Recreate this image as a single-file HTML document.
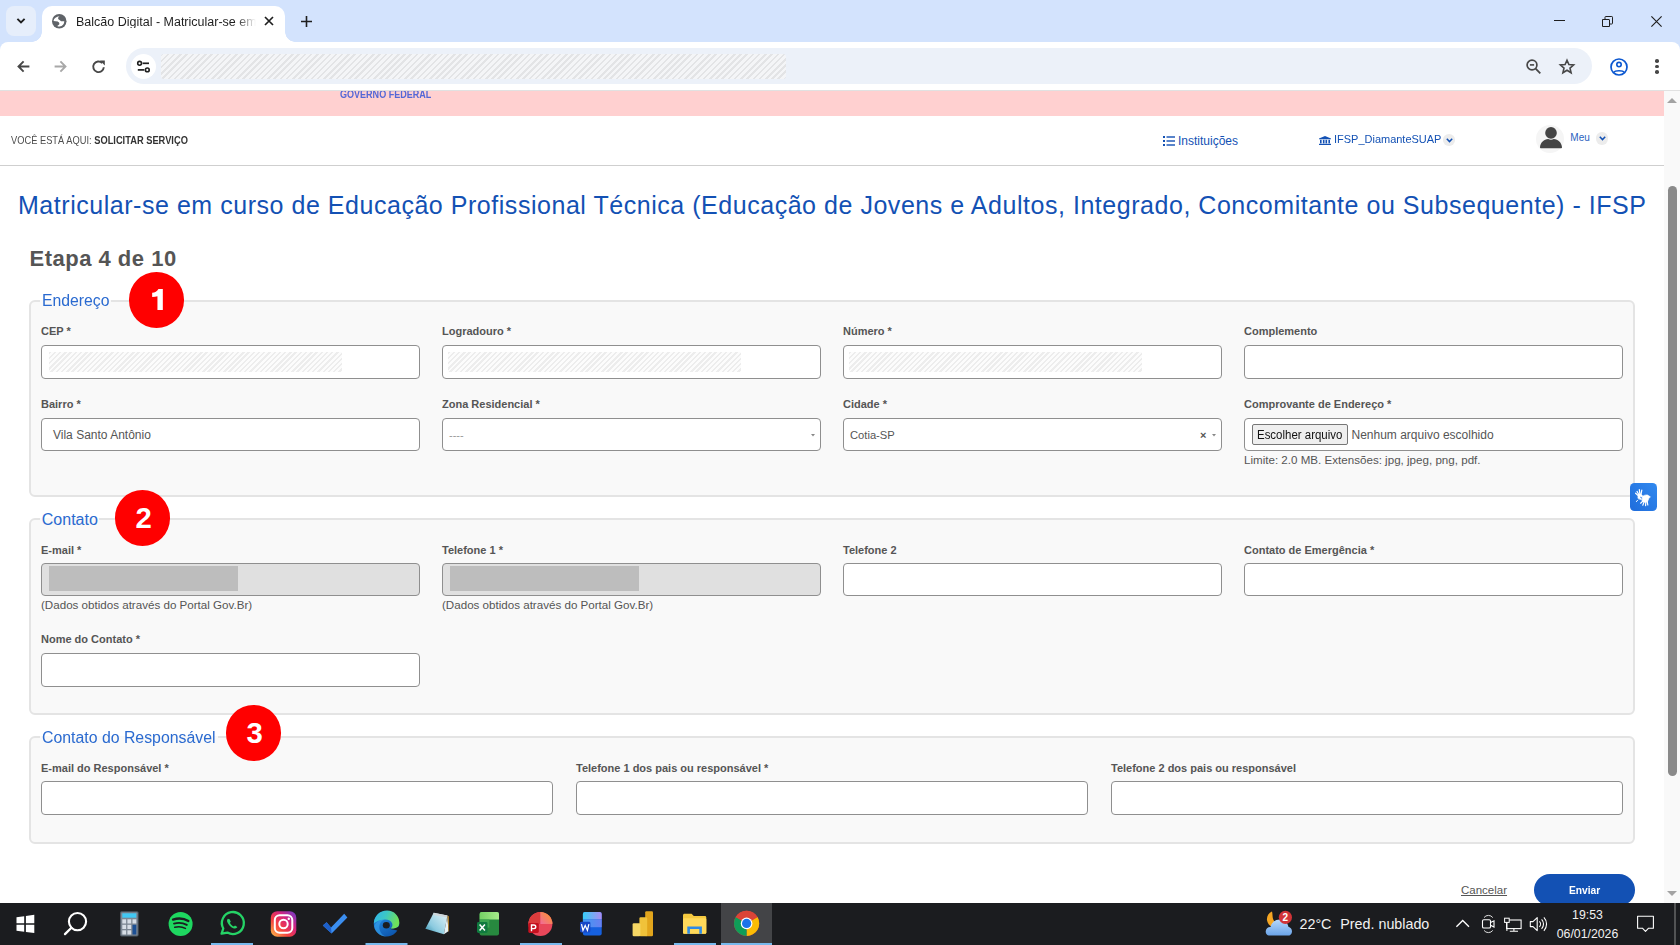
<!DOCTYPE html>
<html><head><meta charset="utf-8">
<style>
*{box-sizing:border-box;margin:0;padding:0}
html,body{width:1680px;height:945px;overflow:hidden;background:#fff;font-family:"Liberation Sans",sans-serif}
.a{position:absolute}
svg{position:absolute;overflow:visible}
#tabbar{left:0;top:0;width:1680px;height:56px;background:#d3e3fd}
#toolbar{left:0;top:42px;width:1680px;height:48px;background:#fff;border-radius:8px 8px 0 0}
#sep{left:0;top:90px;width:1664px;height:1px;background:#e1e1e1}
#scroll{left:1664px;top:91px;width:16px;height:812px;background:#f9f9f9}
#taskbar{left:0;top:903px;width:1680px;height:42px;background:#1c1d21}
.t{position:absolute;white-space:nowrap;line-height:1}
.lbl{position:absolute;font-weight:bold;font-size:11px;color:#555;white-space:nowrap;line-height:1}
.inp{position:absolute;height:34px;background:#fff;border:1px solid #8f8f8f;border-radius:4px}
.dis{background:#e0e0e0}
.hatch{position:absolute;background:repeating-linear-gradient(135deg,#ededed 0 1.7px,#fcfcfc 1.7px 3.7px)}
.fs{position:absolute;left:29px;width:1605.7px;background:#f9f9f9;border:2px solid #e4e4e4;border-radius:6px}
.leg{position:absolute;font-size:16px;color:#2a6ad0;white-space:nowrap;line-height:1;padding:0 1px 0 1.5px}
.badge{position:absolute;width:55.6px;height:55.6px;border-radius:50%;background:#f00;color:#fff;font-weight:bold;font-size:29.3px;text-align:center;line-height:55.6px;padding-left:2.6px}
.help{position:absolute;font-size:11.6px;color:#555;white-space:nowrap;line-height:1}
</style></head>
<body>
<!-- ============ CHROME ============ -->
<div id="tabbar" class="a"></div>
<!-- tab -->
<div class="a" style="left:42px;top:6px;width:243px;height:36px;background:#fff;border-radius:10px 10px 0 0"></div>
<div class="a" style="left:32px;top:32px;width:10px;height:10px;background:radial-gradient(circle at 0 0,#d3e3fd 9.5px,#fff 10px)"></div>
<div class="a" style="left:285px;top:32px;width:10px;height:10px;background:radial-gradient(circle at 100% 0,#d3e3fd 9.5px,#fff 10px)"></div>
<div class="a" style="left:6px;top:6px;width:30px;height:30px;border-radius:8px;background:#e6eefb"></div>
<svg style="left:16px;top:17px" width="10" height="8" viewBox="0 0 10 8"><path d="M1.4 1.8 L5 5.4 L8.6 1.8" fill="none" stroke="#1f1f1f" stroke-width="1.9"/></svg>
<svg style="left:51.5px;top:13.5px" width="14.5" height="14.5" viewBox="0 0 14.5 14.5"><circle cx="7.25" cy="7.25" r="7.25" fill="#5f6368"/><path d="M1.5 6.9C1.9 4.4 4.4 2.4 7.5 2.3C6.7 3 6 3.6 6.1 4.4C6.3 5.2 6.9 5.6 7.6 6C8.3 6.6 8.8 7.2 9.6 7.3C10.5 7.4 11.4 7.2 12.3 7.2C12.3 9.9 10.6 12.1 7.5 12.6C6.6 12.6 5.8 12.4 5.2 11.9C6.2 11.5 7.2 11 7.4 10.1C7.5 9.2 7 8.4 6.3 8C5.4 7.4 4.4 7.4 3.6 7.3Z" fill="#fff"/></svg>
<div class="t" style="left:76px;top:15.8px;font-size:12.5px;color:#1f1f1f;width:180px;overflow:hidden;-webkit-mask-image:linear-gradient(90deg,#000 0,#000 160px,transparent 180px)">Balcão Digital - Matricular-se em curso</div>
<svg style="left:264px;top:16px" width="10" height="10" viewBox="0 0 10 10"><path d="M1 1L9 9M9 1L1 9" stroke="#1f1f1f" stroke-width="1.7"/></svg>
<svg style="left:301px;top:15.5px" width="11" height="11" viewBox="0 0 11 11"><path d="M5.5 0V11M0 5.5H11" stroke="#1f1f1f" stroke-width="1.6"/></svg>
<!-- window controls -->
<div class="a" style="left:1554px;top:19.8px;width:10.5px;height:1.2px;background:#1f1f1f"></div>
<svg style="left:1602px;top:15.5px" width="11" height="11" viewBox="0 0 11 11"><path d="M0.5 3.5h6.5a0.5 .5 0 0 1 .5.5v6.5h-7z" fill="none" stroke="#1f1f1f" stroke-width="1"/><path d="M3 3V1.2a.7.7 0 0 1 .7-.7H9.8a.7.7 0 0 1 .7.7V7.3a.7.7 0 0 1-.7.7H8" fill="none" stroke="#1f1f1f" stroke-width="1"/></svg>
<svg style="left:1650.5px;top:16px" width="11" height="11" viewBox="0 0 11 11"><path d="M0.4 0.4L10.6 10.6M10.6 0.4L0.4 10.6" stroke="#1f1f1f" stroke-width="1.15"/></svg>

<div id="toolbar" class="a"></div>
<svg style="left:17px;top:60px" width="13" height="13" viewBox="0 0 13 13"><path d="M12.4 6.5H1.8M6.6 1.4L1.5 6.5L6.6 11.6" fill="none" stroke="#474747" stroke-width="1.9"/></svg>
<svg style="left:54px;top:60px" width="13" height="13" viewBox="0 0 13 13"><path d="M0.6 6.5H11.2M6.4 1.4L11.5 6.5L6.4 11.6" fill="none" stroke="#a8a8a8" stroke-width="1.9"/></svg>
<svg style="left:92px;top:59.5px" width="14" height="14" viewBox="0 0 14 14"><path d="M11.8 7.2A5.3 5.3 0 1 1 10.2 3" fill="none" stroke="#474747" stroke-width="1.9"/><path d="M8 0.6H12.8V5.4Z" fill="#474747"/></svg>
<div class="a" style="left:126px;top:48px;width:1466px;height:36px;border-radius:18px;background:#ecf1f9"></div>
<div class="a" style="left:131px;top:53.5px;width:25px;height:25px;border-radius:50%;background:#fff"></div>
<svg style="left:137px;top:59.5px" width="13" height="13" viewBox="0 0 13 13"><circle cx="2.6" cy="3.3" r="1.9" fill="none" stroke="#1f1f1f" stroke-width="1.6"/><path d="M5.6 3.3H12" stroke="#1f1f1f" stroke-width="1.7"/><circle cx="10.3" cy="9.9" r="1.9" fill="none" stroke="#1f1f1f" stroke-width="1.6"/><path d="M0.8 9.9H7.3" stroke="#1f1f1f" stroke-width="1.7"/></svg>
<div class="hatch" style="left:161px;top:54px;width:625px;height:25px;border-radius:3px;background:repeating-linear-gradient(135deg,#e3e4e6 0 1.8px,#f4f5f7 1.8px 4.4px)"></div>
<svg style="left:1525.5px;top:58.5px" width="15" height="15" viewBox="0 0 15 15"><circle cx="6" cy="6" r="4.9" fill="none" stroke="#474747" stroke-width="1.7"/><path d="M3.9 5.9H8.1" stroke="#474747" stroke-width="1.6"/><path d="M9.4 9.4L14.3 14.3" stroke="#474747" stroke-width="1.8"/></svg>
<svg style="left:1558.5px;top:58.5px" width="16" height="15" viewBox="0 0 16 15"><path d="M8 1.2L9.9 5.6L14.6 6L11 9.1L12.1 13.7L8 11.2L3.9 13.7L5 9.1L1.4 6L6.1 5.6Z" fill="none" stroke="#474747" stroke-width="1.6" stroke-linejoin="miter"/></svg>
<svg style="left:1610px;top:57.5px" width="18" height="18" viewBox="0 0 18 18"><circle cx="9" cy="9" r="8" fill="none" stroke="#0b57d0" stroke-width="1.7"/><circle cx="9" cy="6.6" r="2.2" fill="none" stroke="#0b57d0" stroke-width="1.6"/><path d="M3.8 14.5C5 12.2 13 12.2 14.2 14.5" fill="none" stroke="#0b57d0" stroke-width="1.6"/></svg>
<div class="a" style="left:1655.2px;top:59px;width:3.6px;height:3.6px;border-radius:50%;background:#474747"></div>
<div class="a" style="left:1655.2px;top:64.6px;width:3.6px;height:3.6px;border-radius:50%;background:#474747"></div>
<div class="a" style="left:1655.2px;top:70.2px;width:3.6px;height:3.6px;border-radius:50%;background:#474747"></div>
<div id="sep" class="a"></div>
<div class="a" style="left:1664px;top:90px;width:16px;height:1px;background:#e1e1e1"></div>

<!-- ============ PAGE ============ -->
<div class="a" style="left:0;top:91px;width:1664px;height:25px;background:#ffd0d0;overflow:hidden">
  <div class="t" style="left:340px;top:-2px;font-size:10.5px;font-weight:bold;color:#5468d6;transform:scaleX(0.86);transform-origin:0 0">GOVERNO FEDERAL</div>
</div>
<div class="t" style="left:11px;top:135.5px;font-size:10.4px;color:#4d4d4d;transform:scaleX(0.895);transform-origin:0 0">VOCÊ ESTÁ AQUI: <b style="color:#333">SOLICITAR SERVIÇO</b></div>
<svg style="left:1163px;top:136px" width="12" height="10" viewBox="0 0 12 10"><rect x="0" y="0" width="2" height="2" fill="#1351b4"/><rect x="0" y="4" width="2" height="2" fill="#1351b4"/><rect x="0" y="8" width="2" height="2" fill="#1351b4"/><rect x="3.5" y="0.3" width="8.5" height="1.4" fill="#1351b4"/><rect x="3.5" y="4.3" width="8.5" height="1.4" fill="#1351b4"/><rect x="3.5" y="8.3" width="8.5" height="1.4" fill="#1351b4"/></svg>
<div class="t" style="left:1178px;top:135px;font-size:12px;color:#1351b4">Instituições</div>
<svg style="left:1318.5px;top:135.5px" width="12" height="9" viewBox="0 0 12 9"><path d="M6 0L12 2.4V3.2H0V2.4Z" fill="#1351b4"/><rect x="1" y="3.8" width="1.6" height="3.6" fill="#1351b4"/><rect x="3.9" y="3.8" width="1.6" height="3.6" fill="#1351b4"/><rect x="6.5" y="3.8" width="1.6" height="3.6" fill="#1351b4"/><rect x="9.4" y="3.8" width="1.6" height="3.6" fill="#1351b4"/><rect x="0" y="7.8" width="12" height="1.2" fill="#1351b4"/></svg>
<div class="t" style="left:1334px;top:134px;font-size:11.5px;color:#1351b4;transform:scaleX(0.955);transform-origin:0 0">IFSP_DiamanteSUAP</div>
<div class="a" style="left:1443px;top:134px;width:11.5px;height:11.5px;border-radius:50%;background:#ececec"></div>
<svg style="left:1445.5px;top:137.5px" width="7" height="5" viewBox="0 0 7 5"><path d="M0.8 0.8L3.5 3.6L6.2 0.8" fill="none" stroke="#1351b4" stroke-width="1.5"/></svg>
<div class="a" style="left:1536px;top:125px;width:28px;height:28px;border-radius:50%;background:#f5f5f5"></div>
<svg style="left:1539.5px;top:127px" width="22" height="22" viewBox="0 0 22 22"><circle cx="11" cy="5.9" r="5.8" fill="#444"/><path d="M1.2 21.3C0.4 21.3 0 20.9 0 20.2C0.4 15.6 4 12.3 8.2 12.1Q11 13.2 13.8 12.1C18 12.3 21.6 15.6 22 20.2C22 20.9 21.6 21.3 20.8 21.3Z" fill="#444"/></svg>
<div class="t" style="left:1570.3px;top:132.8px;font-size:10px;color:#2b62c0">Meu</div>
<div class="a" style="left:1596px;top:132px;width:11.5px;height:12.5px;border-radius:50%;background:#ececec"></div>
<svg style="left:1598.5px;top:136px" width="7" height="5" viewBox="0 0 7 5"><path d="M0.8 0.8L3.5 3.6L6.2 0.8" fill="none" stroke="#1351b4" stroke-width="1.5"/></svg>
<div class="a" style="left:0;top:164.5px;width:1664px;height:1.2px;background:#cfcfcf"></div>

<div class="t" style="left:18px;top:193px;font-size:25px;letter-spacing:0.535px;color:#1351b4">Matricular-se em curso de Educação Profissional Técnica (Educação de Jovens e Adultos, Integrado, Concomitante ou Subsequente) - IFSP</div>
<div class="t" style="left:29.5px;top:247.8px;font-size:22px;letter-spacing:0.5px;font-weight:bold;color:#555">Etapa 4 de 10</div>

<!-- FIELDSET 1 -->
<div class="fs" style="top:300px;height:197px"></div>
<div class="leg" style="left:40.4px;top:293.15px;background:linear-gradient(#fff 0,#fff 6.85px,#f9f9f9 6.85px)"><span style="display:inline-block;transform:scaleX(0.985);transform-origin:0 0">Endereço</span></div>
<div class="badge" style="left:128.7px;top:272.1px"></div><svg style="left:151.5px;top:289.3px" width="11" height="21" viewBox="0 0 10.5 20.7"><path d="M6.2 0H10.5V20.7H5.2V7.2C3.8 7.6 2 7.8 0 7.9V3.8C2.6 3.6 5 2.2 6.2 0Z" fill="#fff"/></svg>

<div class="lbl" style="left:41px;top:326px">CEP *</div>
<div class="lbl" style="left:442px;top:326px">Logradouro *</div>
<div class="lbl" style="left:843px;top:326px">Número *</div>
<div class="lbl" style="left:1244px;top:326px">Complemento</div>
<div class="inp" style="left:41px;top:345px;width:379px"></div>
<div class="inp" style="left:442px;top:345px;width:379px"></div>
<div class="inp" style="left:843px;top:345px;width:379px"></div>
<div class="inp" style="left:1244px;top:345px;width:379px"></div>
<div class="hatch" style="left:49px;top:351.5px;width:293px;height:20px"></div>
<div class="hatch" style="left:448px;top:351.5px;width:293px;height:20px"></div>
<div class="hatch" style="left:849px;top:351.5px;width:293px;height:20px"></div>

<div class="lbl" style="left:41px;top:399px">Bairro *</div>
<div class="lbl" style="left:442px;top:399px">Zona Residencial *</div>
<div class="lbl" style="left:843px;top:399px">Cidade *</div>
<div class="lbl" style="left:1244px;top:399px">Comprovante de Endereço *</div>
<div class="inp" style="left:41px;top:418px;width:379px;height:33px"></div>
<div class="inp" style="left:442px;top:418px;width:379px;height:33px"></div>
<div class="inp" style="left:843px;top:418px;width:379px;height:33px"></div>
<div class="inp" style="left:1244px;top:418px;width:379px;height:33px"></div>
<div class="t" style="left:53px;top:429px;font-size:12px;color:#555">Vila Santo Antônio</div>
<div class="t" style="left:449px;top:430px;font-size:11px;color:#999">----</div>
<svg style="left:810.5px;top:434px" width="4" height="3" viewBox="0 0 4 3"><path d="M0 0H4L2 2.6Z" fill="#888"/></svg>
<div class="t" style="left:850px;top:430.2px;font-size:11.2px;color:#555">Cotia-SP</div>
<div class="t" style="left:1200px;top:429.5px;font-size:11px;font-weight:bold;color:#555">×</div>
<svg style="left:1212px;top:434px" width="4" height="3" viewBox="0 0 4 3"><path d="M0 0H4L2 2.6Z" fill="#888"/></svg>
<div class="a" style="left:1252px;top:424px;width:96px;height:21px;background:#efefef;border:1px solid #767676;border-radius:2px"></div>
<div class="t" style="left:1256.5px;top:429px;font-size:12px;color:#111;transform:scaleX(0.955);transform-origin:0 0">Escolher arquivo</div>
<div class="t" style="left:1351.5px;top:429px;font-size:12px;color:#555">Nenhum arquivo escolhido</div>
<div class="help" style="left:1244px;top:454.4px">Limite: 2.0 MB. Extensões: jpg, jpeg, png, pdf.</div>

<!-- FIELDSET 2 -->
<div class="fs" style="top:518px;height:197px"></div>
<div class="leg" style="left:40.3px;top:511.9px;background:linear-gradient(#fff 0,#fff 6.1px,#f9f9f9 6.1px)">Contato</div>
<div class="badge" style="left:114.5px;top:490.2px">2</div>
<div class="lbl" style="left:41px;top:545px">E-mail *</div>
<div class="lbl" style="left:442px;top:545px">Telefone 1 *</div>
<div class="lbl" style="left:843px;top:545px">Telefone 2</div>
<div class="lbl" style="left:1244px;top:545px">Contato de Emergência *</div>
<div class="inp dis" style="left:41px;top:563px;width:379px;height:33px"></div>
<div class="inp dis" style="left:442px;top:563px;width:379px;height:33px"></div>
<div class="inp" style="left:843px;top:563px;width:379px;height:33px"></div>
<div class="inp" style="left:1244px;top:563px;width:379px;height:33px"></div>
<div class="a" style="left:49px;top:566px;width:189px;height:25px;background:#bdbdbd"></div>
<div class="a" style="left:450px;top:566px;width:189px;height:25px;background:#bdbdbd"></div>
<div class="help" style="left:41px;top:599.1px">(Dados obtidos através do Portal Gov.Br)</div>
<div class="help" style="left:442px;top:599.1px">(Dados obtidos através do Portal Gov.Br)</div>
<div class="lbl" style="left:41px;top:634px">Nome do Contato *</div>
<div class="inp" style="left:41px;top:653px;width:379px;height:34px"></div>

<!-- FIELDSET 3 -->
<div class="fs" style="top:736px;height:107.5px"></div>
<div class="leg" style="left:40.3px;top:729.9px;background:linear-gradient(#fff 0,#fff 6.1px,#f9f9f9 6.1px)"><span style="display:inline-block;transform:scaleX(0.99);transform-origin:0 0">Contato do Responsável</span></div>
<div class="badge" style="left:225.6px;top:705.1px">3</div>
<div class="lbl" style="left:41px;top:763px">E-mail do Responsável *</div>
<div class="lbl" style="left:576px;top:763px">Telefone 1 dos pais ou responsável *</div>
<div class="lbl" style="left:1111px;top:763px">Telefone 2 dos pais ou responsável</div>
<div class="inp" style="left:41px;top:781px;width:512px;height:34px"></div>
<div class="inp" style="left:576px;top:781px;width:512px;height:34px"></div>
<div class="inp" style="left:1111px;top:781px;width:512px;height:34px"></div>

<div class="t" style="left:1461px;top:885px;font-size:11.5px;color:#555;text-decoration:underline">Cancelar</div>
<div class="a" style="left:1534px;top:874px;width:101px;height:32px;border-radius:16px;background:#1351b4"></div>
<div class="t" style="left:1568.5px;top:885px;font-size:11.5px;font-weight:bold;color:#fff;transform:scaleX(0.89);transform-origin:0 0">Enviar</div>

<!-- vlibras -->
<div class="a" style="left:1629.7px;top:483px;width:27.3px;height:28.2px;border-radius:4.5px;background:linear-gradient(45deg,#1f6cdb,#3189ef)"></div>
<svg style="left:1635px;top:488.5px" width="16" height="17" viewBox="0 0 16 17"><g fill="#fff" stroke="#fff" stroke-linecap="round">
<path d="M3.2 9.6C2.6 8.4 2.8 7.2 3.6 6.4L5.4 5.6C6.6 5.4 7.6 6.2 7.6 7.4L6.4 10.4Z" stroke-width="0.6"/>
<path d="M3.6 7L0.6 4.2M4.2 6.2L2 2.4M5 5.8L4.3 0.6M6 5.7L6.8 1.2" stroke-width="1.2" fill="none"/>
<path d="M7 8.2C8.2 6.4 10.4 5.6 12.6 6C13.6 6.8 14.6 7.4 15.4 7.8L13.8 9.6L12.6 12.6C11 13.6 8.6 13.4 7.2 12Z" stroke-width="0.6"/>
<path d="M8 12L5.6 14.2M9.2 12.6L7.8 16.2M10.8 12.8L10.6 16.6M12.2 12.4L12.8 16" stroke-width="1.2" fill="none"/>
<path d="M2.6 11.2L1.4 12.6" stroke-width="1" fill="none"/>
<path d="M5.6 8.2C6.4 8 7 8.6 6.8 9.2" stroke="#2a7ae6" stroke-width="0.9" fill="none"/>
</g></svg>

<!-- scrollbar -->
<div id="scroll" class="a"></div>
<svg style="left:1667px;top:98px" width="10" height="5" viewBox="0 0 10 5"><path d="M0 5L5 0L10 5Z" fill="#a3a3a3"/></svg>
<div class="a" style="left:1667.5px;top:186px;width:9.5px;height:590px;border-radius:5px;background:#8a8a8a"></div>
<svg style="left:1667px;top:890.5px" width="10" height="5" viewBox="0 0 10 5"><path d="M0 0L10 0L5 5Z" fill="#a3a3a3"/></svg>

<!-- ============ TASKBAR ============ -->

<svg style="left:0;top:903px" width="1680" height="42" viewBox="0 903 1680 42">
<defs>
 <linearGradient id="ig" x1="0" y1="1" x2="1" y2="0"><stop offset="0" stop-color="#fdc34a"/><stop offset="0.35" stop-color="#f6433e"/><stop offset="0.65" stop-color="#d3237f"/><stop offset="1" stop-color="#6a3fd2"/></linearGradient>
 <linearGradient id="edg" x1="0" y1="0" x2="1" y2="1"><stop offset="0" stop-color="#37c5f0"/><stop offset="0.55" stop-color="#1a7fd4"/><stop offset="1" stop-color="#0c59a4"/></linearGradient>
 <linearGradient id="edg2" x1="0" y1="0" x2="1" y2="0.3"><stop offset="0" stop-color="#2fb4ee"/><stop offset="0.5" stop-color="#3cc7c6"/><stop offset="1" stop-color="#6fe05a"/></linearGradient>
 <linearGradient id="edgb" x1="0" y1="0" x2="0.6" y2="1"><stop offset="0" stop-color="#2794ea"/><stop offset="1" stop-color="#0e58b0"/></linearGradient>
 <linearGradient id="xlt" x1="0" y1="0" x2="1" y2="0"><stop offset="0" stop-color="#74d164"/><stop offset="1" stop-color="#a6ea8a"/></linearGradient>
 <linearGradient id="ppo" x1="0" y1="1" x2="1" y2="0"><stop offset="0" stop-color="#f26a9a"/><stop offset="1" stop-color="#f99a22"/></linearGradient>
 <linearGradient id="wdt" x1="0" y1="0" x2="1" y2="0"><stop offset="0" stop-color="#36cdf8"/><stop offset="1" stop-color="#ae8cf0"/></linearGradient>
 <linearGradient id="wdm" x1="0" y1="0" x2="1" y2="0"><stop offset="0" stop-color="#3f9af3"/><stop offset="1" stop-color="#6a7ff0"/></linearGradient>
 <linearGradient id="npd" x1="0" y1="1" x2="1" y2="0"><stop offset="0" stop-color="#2f8aa8"/><stop offset="0.35" stop-color="#8ccbe0"/><stop offset="1" stop-color="#e6f4f8"/></linearGradient>
 <linearGradient id="ppt" x1="0" y1="0" x2="1" y2="1"><stop offset="0" stop-color="#e8534a"/><stop offset="1" stop-color="#f79a6e"/></linearGradient>
 <linearGradient id="wrd" x1="0" y1="0" x2="0" y2="1"><stop offset="0" stop-color="#5ab0f6"/><stop offset="1" stop-color="#1b5fd6"/></linearGradient>
 <linearGradient id="xls" x1="0" y1="0" x2="0" y2="1"><stop offset="0" stop-color="#5ed580"/><stop offset="1" stop-color="#1f7f44"/></linearGradient>
 <linearGradient id="pbi" x1="0" y1="0" x2="0" y2="1"><stop offset="0" stop-color="#f4d54b"/><stop offset="1" stop-color="#e0a825"/></linearGradient>
 <linearGradient id="cld" x1="0" y1="0" x2="0" y2="1"><stop offset="0" stop-color="#b6d8fb"/><stop offset="1" stop-color="#6aa3e8"/></linearGradient>
</defs>
<rect x="0" y="903" width="1680" height="42" fill="#1b1c1f"/>
<!-- chrome active bg -->
<rect x="721" y="903" width="51" height="42" fill="#434447"/>
<!-- indicators -->
<rect x="211" y="943" width="42" height="2" fill="#76b9ed"/>
<rect x="365.5" y="943" width="42" height="2" fill="#76b9ed"/>
<rect x="520" y="943" width="42" height="2" fill="#76b9ed"/>
<rect x="674" y="943" width="42" height="2" fill="#76b9ed"/>
<rect x="721" y="943" width="51" height="2" fill="#76b9ed"/>
<!-- windows -->
<path d="M16.5 917.3L24.2 916.2V923.2H16.5Z M16.5 924.8H24.2V931.8L16.5 930.7Z M25.9 916L34.3 914.8V923.2H25.9Z M25.9 924.8H34.3V933.1L25.9 931.9Z" fill="#fff"/>
<!-- search -->
<circle cx="77.5" cy="921.6" r="8.6" fill="none" stroke="#fff" stroke-width="2.1"/>
<path d="M71.4 927.7L65 934.1" stroke="#fff" stroke-width="2.3" stroke-linecap="round"/>
<!-- calculator -->
<rect x="120" y="911.2" width="18.6" height="25.2" rx="1.6" fill="#4f5a66"/>
<rect x="121" y="912.2" width="16.6" height="23.2" rx="1" fill="#7c8794"/>
<rect x="122.3" y="913.3" width="14" height="4.4" fill="#41c8f4"/>
<rect x="122.3" y="919.3" width="3.8" height="4.2" fill="#d6dde6"/><rect x="127.4" y="919.3" width="3.8" height="4.2" fill="#d6dde6"/><rect x="132.5" y="919.3" width="3.8" height="4.2" fill="#d6dde6"/>
<rect x="122.3" y="924.8" width="3.8" height="4.2" fill="#d6dde6"/><rect x="127.4" y="924.8" width="3.8" height="4.2" fill="#d6dde6"/>
<rect x="122.3" y="930.3" width="3.8" height="4.2" fill="#d6dde6"/><rect x="127.4" y="930.3" width="3.8" height="4.2" fill="#d6dde6"/>
<rect x="132.5" y="924.8" width="3.8" height="9.7" fill="#1b4f94"/>
<!-- spotify -->
<circle cx="180.6" cy="923.9" r="12" fill="#1ed760"/>
<path d="M173 919.6C178 918 184 918.4 188.4 921" fill="none" stroke="#1c1d21" stroke-width="2.3" stroke-linecap="round"/>
<path d="M174 923.6C178.2 922.4 183 922.8 186.8 924.9" fill="none" stroke="#1c1d21" stroke-width="1.9" stroke-linecap="round"/>
<path d="M174.8 927.3C178.4 926.4 182.2 926.7 185.4 928.4" fill="none" stroke="#1c1d21" stroke-width="1.6" stroke-linecap="round"/>
<!-- whatsapp -->
<path d="M221.6 933.7L223.3 928.5A11 11 0 1 1 227.4 932.6Z" fill="none" stroke="#25d366" stroke-width="2.3" stroke-linejoin="round"/>
<path d="M227.8 918.8C227 919.6 226.8 920.8 227.4 922.2C228.4 924.6 230.6 927 233.2 928.2C234.8 928.9 236 928.7 236.8 927.8L237.4 926.9L235 925.6L233.9 926.6C232.2 925.9 230.7 924.4 229.9 922.8L230.8 921.7L229.6 919.2Z" fill="#25d366"/>
<!-- instagram -->
<rect x="270.8" y="911.2" width="25.5" height="25.5" rx="6.5" fill="url(#ig)"/>
<rect x="274.8" y="915.2" width="17.5" height="17.5" rx="4.8" fill="none" stroke="#fff" stroke-width="2"/>
<circle cx="283.5" cy="924" r="4.2" fill="none" stroke="#fff" stroke-width="2"/>
<circle cx="288.8" cy="918.8" r="1.2" fill="#fff"/>
<!-- todo -->
<path d="M322.8 925.6L326.6 922.3L331 927.4L344.2 913.8L347.4 917.4L331.6 933.6Z" fill="#3b8ef0"/>
<path d="M322.8 925.6L326.6 922.3L331 927.4L331.6 933.6Z" fill="#1d5fc9"/>
<!-- edge -->
<circle cx="386.5" cy="923.8" r="12.7" fill="url(#edgb)"/>
<path d="M373.8 923.2C374.2 915.8 380 910.4 387 910.4C394.2 910.4 399.3 916 399.3 922.6C399.3 924.2 398.9 925.6 398.2 926.6C396.6 928.6 393.4 929.2 390.6 928.6C392.2 927.4 392.8 925.6 392.2 923.6C391.2 920.6 388 919.2 384.8 919.4C380.4 919.8 376.2 921.2 373.8 923.2Z" fill="url(#edg2)"/>
<path d="M374.2 926.5C375.6 921.8 380 919.6 384.6 919.6C380.6 921 378.6 925 379.6 929.4C380.4 933 383 935.8 386.4 936.6C379.8 936.4 375 932 374.2 926.5Z" fill="#3aa8f0" opacity="0.55"/>
<path d="M400 925.2C397 928.4 392.6 929.2 388.4 928.6C392.4 929.6 395.6 930.2 398.6 931Z" fill="#1c1d21"/>
<ellipse cx="386.3" cy="925.3" rx="3.5" ry="3.3" fill="#1c1d21"/>
<!-- notepad -->
<path d="M433.7 912.8L447.4 915.4L443.9 934.3L425.4 928.8Z" fill="url(#npd)"/>
<path d="M447.4 915.4L448.4 931.2L443.9 934.3Z" fill="#e9f1f4"/>
<path d="M447.4 915.4L448.9 916.2L449 931.4L448.4 931.2Z" fill="#b3842f"/>
<path d="M433.7 912.8L447.4 915.4L447 917.4L433.2 914.9Z" fill="#cfd6da"/>
<!-- excel -->
<rect x="479.6" y="912.1" width="19.4" height="23.3" rx="2" fill="#27893f"/>
<path d="M479.6 919.6V914.1Q479.6 912.1 481.6 912.1H497Q499 912.1 499 914.1V919.6Z" fill="url(#xlt)"/>
<rect x="479.6" y="919.6" width="9.7" height="8" fill="#3aa550"/>
<rect x="477" y="922" width="10.5" height="10.9" rx="1.4" fill="#0f7a3f"/>
<path d="M479.6 924.4L484.9 930.6M484.9 924.4L479.6 930.6" stroke="#fff" stroke-width="1.5"/>
<!-- powerpoint -->
<circle cx="540.4" cy="924" r="12" fill="#e8475a"/>
<path d="M540.4 912A12 12 0 0 0 528.4 924H540.4Z" fill="#db3c3c"/>
<path d="M540.4 912A12 12 0 0 1 552.4 924H540.4Z" fill="url(#ppo)"/>
<rect x="528.3" y="922.9" width="10.5" height="10" rx="1.4" fill="#c5111f"/>
<path d="M531.5 931.2V925H533.9C536.4 925 536.4 928.6 533.9 928.6H531.5" fill="none" stroke="#fff" stroke-width="1.4"/>
<!-- word -->
<rect x="582.9" y="912.1" width="18.8" height="23.3" rx="2" fill="#1660df"/>
<path d="M582.9 919.6V914.1Q582.9 912.1 584.9 912.1H599.7Q601.7 912.1 601.7 914.1V919.6Z" fill="url(#wdt)"/>
<rect x="582.9" y="919.6" width="18.8" height="7.6" fill="url(#wdm)"/>
<rect x="580" y="921.7" width="10.4" height="10.8" rx="1.4" fill="#1746c6"/>
<path d="M581.5 924.2L583 930.4L585.2 925.6L587.4 930.4L588.9 924.2" fill="none" stroke="#fff" stroke-width="1.25"/>
<!-- powerbi -->
<rect x="645.2" y="911.3" width="7.8" height="25" rx="1.2" fill="#e2a51c"/>
<rect x="639.4" y="917.3" width="7.8" height="19" rx="1.2" fill="#f0c23a"/>
<rect x="632.6" y="923.3" width="7.8" height="13" rx="1.2" fill="#f6d764"/>
<!-- explorer -->
<path d="M683 915.5C683 914.4 683.6 913.8 684.6 913.8H691.6L693.8 916H704.8C705.8 916 706.3 916.6 706.3 917.5V932.3C706.3 933.3 705.8 933.8 704.8 933.8H684.6C683.6 933.8 683 933.3 683 932.3Z" fill="#f5c93f"/>
<rect x="683" y="918.2" width="23.3" height="15.6" rx="1.3" fill="#ffd95a"/>
<path d="M688.6 933.8V927.8H700.6V933.8" fill="none" stroke="#2d8ae6" stroke-width="2.6"/>
<!-- chrome -->
<circle cx="746.6" cy="923.4" r="12.6" fill="#db4437"/>
<path d="M746.6 923.4L757.5 917.1A12.6 12.6 0 0 1 746.6 936Z" fill="#fbbc04"/>
<path d="M746.6 923.4L746.6 936A12.6 12.6 0 0 1 735.7 917.1Z" fill="#0f9d58"/>
<path d="M746.6 923.4L735.7 917.1A12.6 12.6 0 0 1 757.5 917.1Z" fill="#db4437"/>
<circle cx="746.6" cy="923.4" r="5.8" fill="#fff"/>
<circle cx="746.6" cy="923.4" r="4.6" fill="#1a73e8"/>
<!-- weather -->
<path d="M1272 911.5C1268.5 913 1266.5 916.6 1267 920.3C1267.6 924.6 1271.4 927.7 1275.8 927.3C1278 927.1 1280 926 1281.3 924.3C1277.3 924.6 1273.6 921.8 1272.8 917.9C1272.4 915.6 1272.6 913.2 1272 911.5Z" fill="#f5a623"/>
<path d="M1270 935.6C1266.4 935.6 1265.7 933 1265.7 931.5C1265.7 928.8 1268 926.8 1270.6 927C1271.4 922.6 1275.2 919.6 1279.6 919.6C1284.2 919.6 1287.8 922.8 1288.4 926.8C1290.6 927.3 1292 929.3 1292 931.4C1292 933.8 1290.2 935.6 1287.8 935.6Z" fill="url(#cld)"/>
<circle cx="1285.4" cy="917.3" r="6.6" fill="#d13438"/>
<text x="1285.4" y="921" font-family="Liberation Sans" font-weight="bold" font-size="10" fill="#fff" text-anchor="middle">2</text>
<text x="1299.5" y="928.9" font-family="Liberation Sans" font-size="14.3" fill="#f2f2f2">22°C</text>
<text x="1340.3" y="928.9" font-family="Liberation Sans" font-size="14.3" fill="#f2f2f2">Pred. nublado</text>
<!-- tray -->
<path d="M1456.4 926.8L1462.7 920.5L1469 926.8" fill="none" stroke="#fff" stroke-width="1.3"/>
<path d="M1484 917.6A5.5 5.5 0 0 1 1492.8 917.6M1484 930.4A5.5 5.5 0 0 0 1492.8 930.4" fill="none" stroke="#ddd" stroke-width="1"/>
<rect x="1482.5" y="919.8" width="8" height="8.2" rx="1.3" fill="none" stroke="#fff" stroke-width="1.1"/>
<path d="M1490.5 922.6L1494 920.8V927L1490.5 925.2" fill="none" stroke="#fff" stroke-width="1.1"/>
<rect x="1506.6" y="920" width="14.5" height="8.6" fill="none" stroke="#fff" stroke-width="1.1"/>
<path d="M1513.9 928.6V931.2M1509.8 931.2H1518" stroke="#fff" stroke-width="1.1"/>
<rect x="1504.6" y="918.2" width="4.6" height="4.2" fill="#1c1d21" stroke="#fff" stroke-width="1"/>
<path d="M1506.9 922.4V931" stroke="#fff" stroke-width="1"/>
<path d="M1530.3 921.6H1533L1537.2 917.6V930.6L1533 926.6H1530.3Z" fill="none" stroke="#fff" stroke-width="1.1" stroke-linejoin="round"/>
<path d="M1539.4 921.3A4 4 0 0 1 1539.4 926.9M1541.6 919.3A7 7 0 0 1 1541.6 928.9M1543.9 917.4A9.8 9.8 0 0 1 1543.9 930.8" fill="none" stroke="#fff" stroke-width="1.1"/>
<text x="1587.5" y="918.6" font-family="Liberation Sans" font-size="12.3" fill="#f2f2f2" text-anchor="middle">19:53</text>
<text x="1587.5" y="937.9" font-family="Liberation Sans" font-size="12.3" fill="#f2f2f2" text-anchor="middle">06/01/2026</text>
<path d="M1637.6 916.2H1653.4V928.2H1648.6L1645.5 931.4L1642.4 928.2H1637.6Z" fill="none" stroke="#fff" stroke-width="1.1" stroke-linejoin="round"/>
<rect x="1674.5" y="903" width="1" height="42" fill="#8a8a8a"/>
</svg>

</body></html>
